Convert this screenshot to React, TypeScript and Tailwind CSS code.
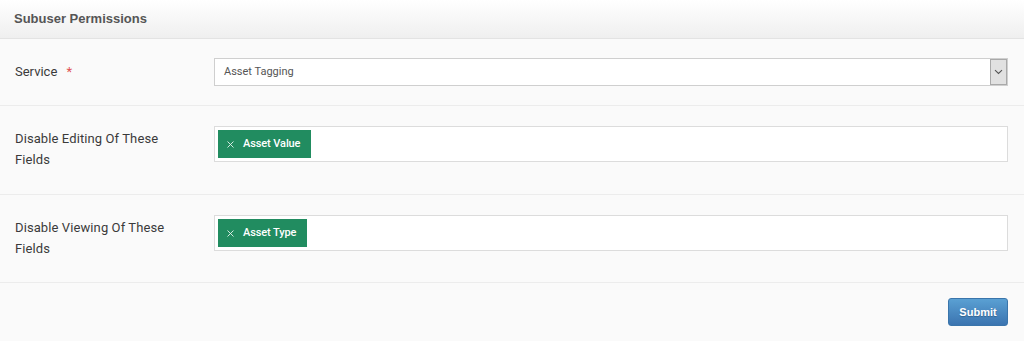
import React from "react";

const Tag = ({ label }: { label: string }) => (
  <span className="flex h-[28px] items-center bg-[#218c60] pl-[9px] pr-[11px] text-[11px] font-medium tracking-[-0.1px] text-white">
    <svg width="7" height="7" viewBox="0 0 7 7" className="mr-[9px]">
      <path d="M0.5 0.5 L6.5 6.5 M6.5 0.5 L0.5 6.5" stroke="#e6f3ec" strokeWidth="0.9" />
    </svg>
    {label}
  </span>
);

export default function App() {
  return (
    <div className="w-[1024px] h-[341px] bg-[#fafafa] font-['Roboto',sans-serif] text-[#333]">
      <div className="h-[39px] border-b border-[#e3e3e3] bg-gradient-to-b from-[#ffffff] to-[#efefef] pl-[14px] flex items-center">
        <span className="text-[13px] font-bold text-[#555] font-['Liberation_Sans',sans-serif]">Subuser Permissions</span>
      </div>

      <div className="h-[67px] border-b border-[#ececec] flex items-center pl-[15px] pr-[16px]">
        <div className="w-[199px] text-[13px] text-[#3a3a3a]">
          Service <span className="ml-[6px] text-[#e05252]">*</span>
        </div>
        <div className="flex-1 h-[28px] bg-white border border-[#cfcfcf] flex items-center">
          <span className="flex-1 pl-[9px] text-[11px] text-[#555]">Asset Tagging</span>
          <span className="h-[26px] w-[17px] bg-[#e1e1e1] border border-[#a9a9a9] flex items-center justify-center">
            <svg width="9" height="6" viewBox="0 0 9 6" fill="none">
              <path d="M1 1.2 L4.5 4.5 L8 1.2" stroke="#555" strokeWidth="1.1" />
            </svg>
          </span>
        </div>
      </div>

      <div className="h-[89px] border-b border-[#ececec] flex items-start pt-[20px] pl-[15px] pr-[16px]">
        <div className="w-[199px] pt-[2px] text-[13px] tracking-[0.1px] leading-[21px] text-[#3a3a3a]">
          Disable Editing Of These
          <br />
          Fields
        </div>
        <div className="flex-1 h-[36px] bg-white border border-[#dcdcdc] p-[3px]">
          <div className="flex">
            <Tag label="Asset Value" />
          </div>
        </div>
      </div>

      <div className="h-[88px] border-b border-[#ececec] flex items-start pt-[20px] pl-[15px] pr-[16px]">
        <div className="w-[199px] pt-[2px] text-[13px] tracking-[0.1px] leading-[21px] text-[#3a3a3a]">
          Disable Viewing Of These
          <br />
          Fields
        </div>
        <div className="flex-1 h-[36px] bg-white border border-[#dcdcdc] p-[3px]">
          <div className="flex">
            <Tag label="Asset Type" />
          </div>
        </div>
      </div>

      <div className="flex justify-end pt-[15px] pr-[16px]">
        <button className="h-[28px] w-[60px] rounded-[3px] border border-[#3a75ab] bg-gradient-to-b from-[#5aa0d3] to-[#3b74b0] text-[11px] font-bold text-white font-['Liberation_Sans',sans-serif] [text-shadow:0_1px_1px_rgba(0,0,0,0.25)]">
          Submit
        </button>
      </div>
    </div>
  );
}
